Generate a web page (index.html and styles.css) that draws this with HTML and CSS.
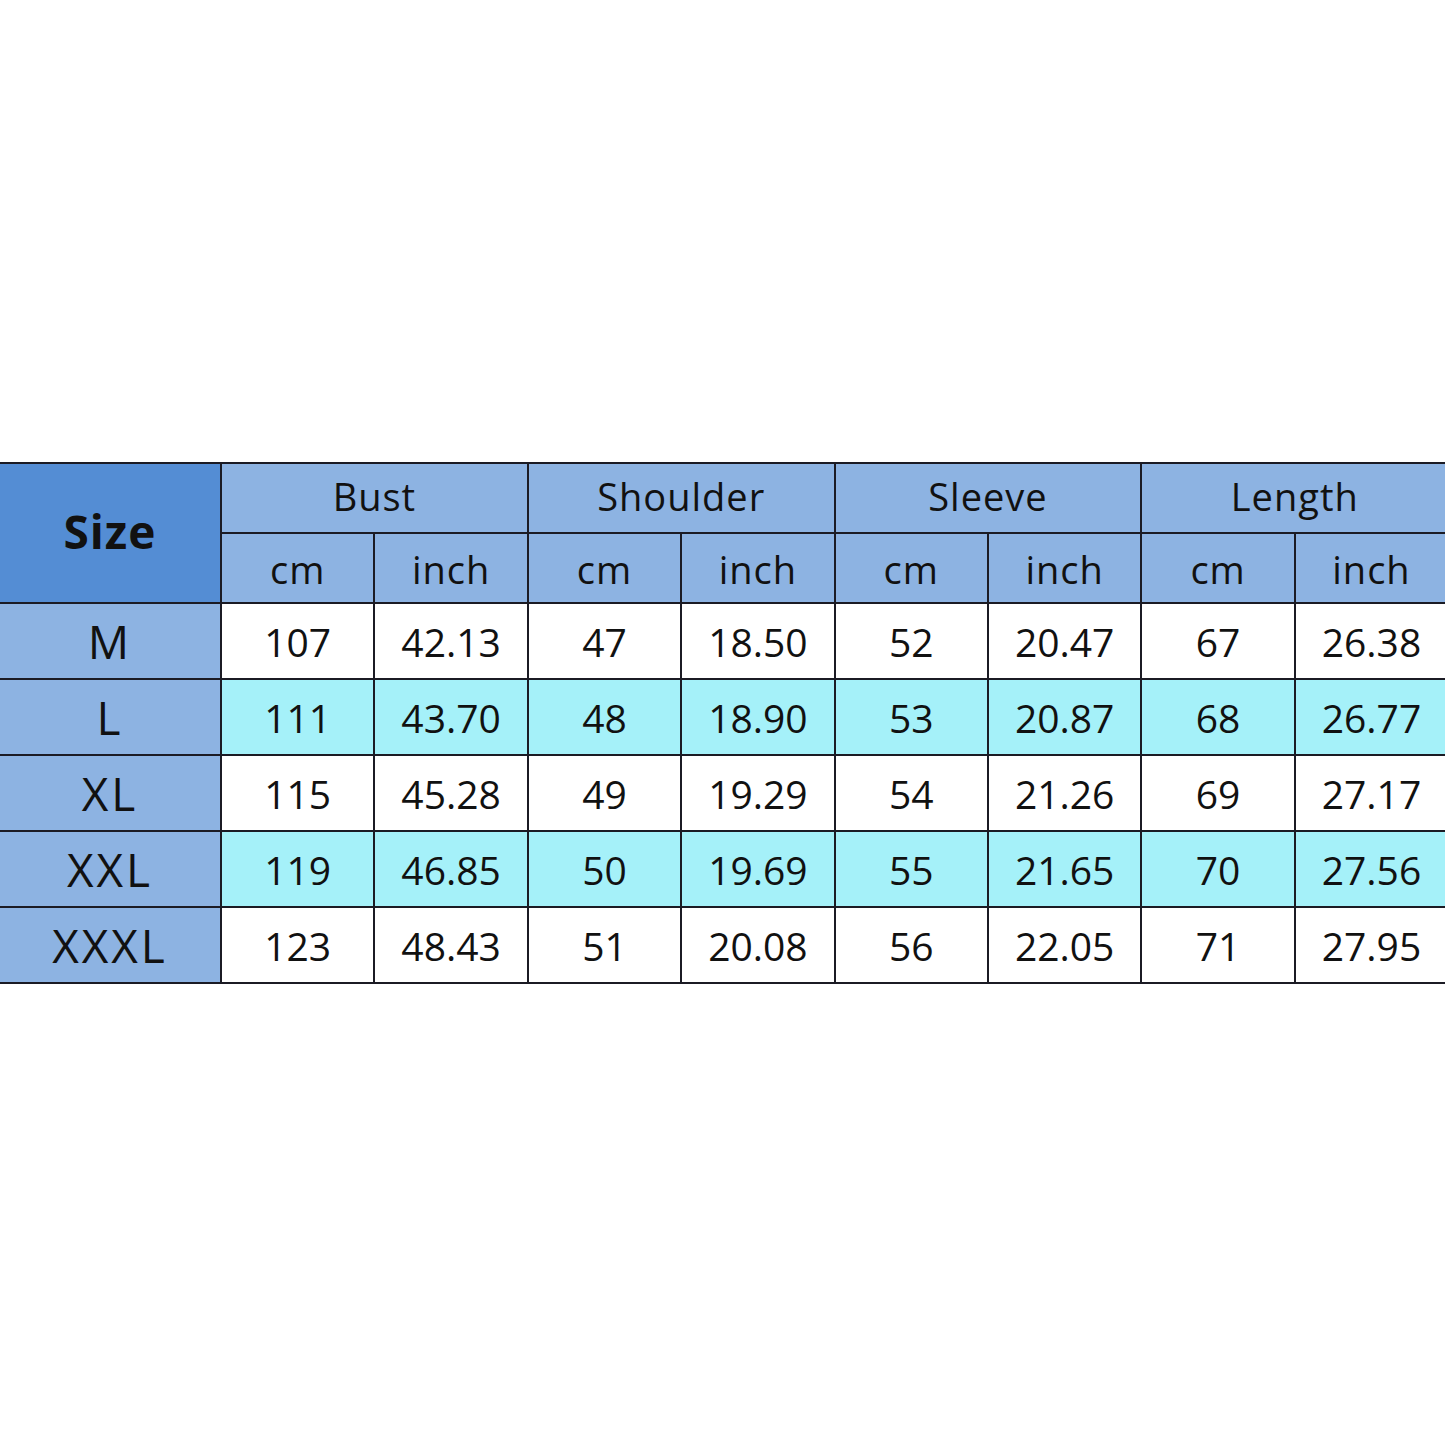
FILE: index.html
```html
<!DOCTYPE html>
<html>
<head>
<meta charset="utf-8">
<link rel="stylesheet" href="styles.css">
</head>
<body>
<div class="wrap">
<table class="chart">
  <colgroup>
    <col class="c-size">
    <col class="c"><col class="c"><col class="c"><col class="c">
    <col class="c"><col class="c"><col class="c"><col class="c">
  </colgroup>
  <thead>
    <tr class="h1">
      <th class="size-h" rowspan="2">Size</th>
      <th colspan="2">Bust</th>
      <th colspan="2">Shoulder</th>
      <th colspan="2">Sleeve</th>
      <th colspan="2">Length</th>
    </tr>
    <tr class="h2">
      <th>cm</th><th>inch</th><th>cm</th><th>inch</th><th>cm</th><th>inch</th><th>cm</th><th>inch</th>
    </tr>
  </thead>
  <tbody>
    <tr><th>M</th><td>107</td><td>42.13</td><td>47</td><td>18.50</td><td>52</td><td>20.47</td><td>67</td><td>26.38</td></tr>
    <tr class="alt"><th>L</th><td>111</td><td>43.70</td><td>48</td><td>18.90</td><td>53</td><td>20.87</td><td>68</td><td>26.77</td></tr>
    <tr><th>XL</th><td>115</td><td>45.28</td><td>49</td><td>19.29</td><td>54</td><td>21.26</td><td>69</td><td>27.17</td></tr>
    <tr class="alt"><th>XXL</th><td>119</td><td>46.85</td><td>50</td><td>19.69</td><td>55</td><td>21.65</td><td>70</td><td>27.56</td></tr>
    <tr><th>XXXL</th><td>123</td><td>48.43</td><td>51</td><td>20.08</td><td>56</td><td>22.05</td><td>71</td><td>27.95</td></tr>
  </tbody>
</table>
</div>
</body>
</html>
```
FILE: styles.css
```css
html, body {
  margin: 0;
  padding: 0;
  background: #ffffff;
  overflow: hidden;
}
.wrap {
  padding-top: 462px;
  width: 1445px;
  overflow: hidden;
}
.chart {
  border-collapse: collapse;
  table-layout: fixed;
  width: 1451px;
  margin-left: -2px;
  font-family: "Open Sans", "DejaVu Sans", sans-serif;
  color: #111111;
}
.c-size { width: 222px; }
.c { width: 153.4px; }
.chart th, .chart td {
  border: 2px solid #1b1b24;
  text-align: center;
  vertical-align: middle;
  padding: 0;
  font-weight: 400;
}
.chart thead th {
  background: #8db3e2;
  font-size: 38px;
  letter-spacing: 1px;
}
.chart thead .h1 th { height: 64px; padding-bottom: 4px; }
.chart thead .h2 th { height: 66px; padding-top: 2px; }
.chart thead .size-h {
  background: #548dd4;
  font-size: 46px;
  font-weight: 700;
  letter-spacing: 1px;
}
.chart tbody th {
  background: #8db3e2;
  font-size: 46px;
  letter-spacing: 3px;
  height: 74px;
}
.chart tbody td {
  background: #ffffff;
  font-size: 39px;
  height: 74px;
}
.chart tbody tr.alt td {
  background: #a5f1f9;
}
```
